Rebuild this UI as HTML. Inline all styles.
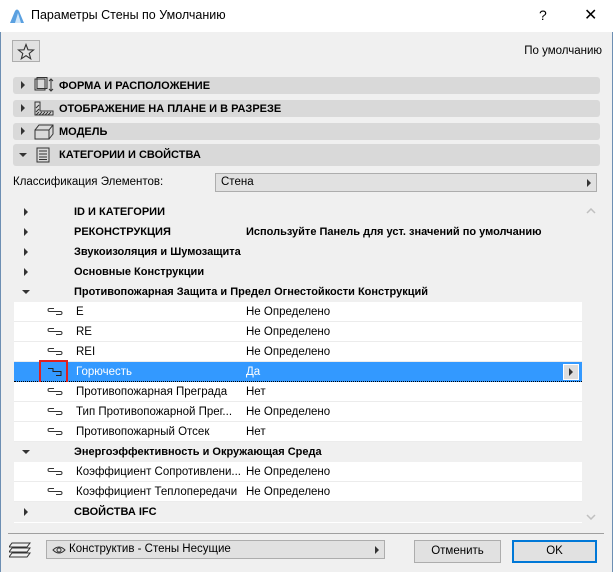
<!DOCTYPE html><html><head><meta charset="utf-8"><style>
*{margin:0;padding:0;box-sizing:border-box}
body{width:613px;height:572px;background:#f0f0f0;font-family:"Liberation Sans",sans-serif;font-size:11.5px;color:#000;position:relative;overflow:hidden}
.a{position:absolute}
.tb{left:0;top:0;width:613px;height:32px;background:#fff}
.sec{left:13px;width:587px;background:#d9d9d9;border-radius:3px;font-weight:bold;font-size:11px}
.sec .t{position:absolute;left:46px;top:50%;transform:translateY(-50%)}
.tri{position:absolute;width:0;height:0;border-top:4px solid transparent;border-bottom:4px solid transparent;border-left:4px solid #333}
.trd{position:absolute;width:0;height:0;border-left:4px solid transparent;border-right:4px solid transparent;border-top:4px solid #333}
.row{position:absolute;left:14px;width:568px;height:20px;line-height:20px;white-space:nowrap}
.cat{background:#f0f0f0;font-weight:bold;font-size:11px}
.ch{background:#fff;border-bottom:1px solid #ececec}
.row .n{position:absolute;left:60px}
.row .v{position:absolute;left:232px}
.lk{position:absolute;left:33px;top:5px}
</style></head><body>
<div class="a" style="left:0;top:0;width:1px;height:572px;background:#6d8fb3"></div>
<div class="a" style="right:0;top:0;width:1px;height:572px;background:#6d8fb3"></div>
<div class="a tb"></div>
<svg class="a" style="left:9px;top:8px" width="16" height="16"><path d="M1 15 L6 3 Q8 0 10 3 L15 15 Z" fill="#5aa0e0"/><path d="M6 15 L9 5 L12 15Z" fill="#cfe6fa"/></svg>
<div class="a" style="left:31px;top:8px;font-size:12.5px">Параметры Стены по Умолчанию</div>
<div class="a" style="left:539px;top:7px;font-size:14px">?</div>
<div class="a" style="left:584px;top:5px;font-size:16px">✕</div>
<div class="a" style="left:12px;top:40px;width:28px;height:22px;border:1px solid #adadad;background:#e1e1e1"></div>
<svg class="a" style="left:17px;top:43px" width="18" height="17"><path d="M9 1.5 L11 6.8 L16.5 7 L12.2 10.4 L13.7 15.8 L9 12.7 L4.3 15.8 L5.8 10.4 L1.5 7 L7 6.8Z" fill="none" stroke="#333" stroke-width="1.1"/></svg>
<div class="a" style="right:11px;top:45px">По умолчанию</div>

<div class="a sec" style="top:77px;height:17px"><div class="tri" style="left:8px;top:4px"></div><svg class="a" style="left:20px;top:0" width="22" height="17"><rect x="2" y="2" width="10" height="11" fill="none" stroke="#333"/><rect x="4" y="0.5" width="10" height="11" fill="none" stroke="#333"/><path d="M18 2v12M16 4l2-2 2 2M16 12l2 2 2-2" stroke="#333" fill="none"/></svg><span class="t">ФОРМА И РАСПОЛОЖЕНИЕ</span></div>
<div class="a sec" style="top:100px;height:17px"><div class="tri" style="left:8px;top:4px"></div><svg class="a" style="left:20px;top:0" width="22" height="17"><path d="M2 2v13h18v-4H7V2Z" fill="none" stroke="#333"/><path d="M3 15l3-3M6 15l3-3M9 15l3-3M12 15l3-3M15 15l3-3M3 12l3-3M3 8l3-3" stroke="#333"/></svg><span class="t">ОТОБРАЖЕНИЕ НА ПЛАНЕ И В РАЗРЕЗЕ</span></div>
<div class="a sec" style="top:123px;height:17px"><div class="tri" style="left:8px;top:4px"></div><svg class="a" style="left:20px;top:0" width="22" height="17"><path d="M2 7h14v9H2ZM2 7l4-5h14v9l-4 5M16 7l4-5" fill="none" stroke="#333"/></svg><span class="t">МОДЕЛЬ</span></div>
<div class="a sec" style="top:144px;height:22px"><div class="trd" style="left:6px;top:9px"></div><svg class="a" style="left:22px;top:3px" width="16" height="16"><path d="M2 1h12v14H2Z" fill="none" stroke="#333"/><path d="M4 4h8M4 7h8M4 10h8M4 12.5h8" stroke="#333"/></svg><span class="t">КАТЕГОРИИ И СВОЙСТВА</span></div>

<div class="a" style="left:13px;top:176px">Классификация Элементов:</div>
<div class="a" style="left:215px;top:173px;width:382px;height:19px;border:1px solid #adadad;background:#e1e1e1"><span style="position:absolute;left:5px;top:2px">Стена</span><div class="tri" style="right:5px;top:5px"></div></div>

<div class="a" style="left:14px;top:202px;width:568px;height:321px;background:#fff"></div>
<div class="row cat" style="top:202px"><div class="tri" style="left:10px;top:6px"></div><span class="n">ID И КАТЕГОРИИ</span></div>
<div class="row cat" style="top:222px"><div class="tri" style="left:10px;top:6px"></div><span class="n">РЕКОНСТРУКЦИЯ</span><span class="v">Используйте Панель для уст. значений по умолчанию</span></div>
<div class="row cat" style="top:242px"><div class="tri" style="left:10px;top:6px"></div><span class="n">Звукоизоляция и Шумозащита</span></div>
<div class="row cat" style="top:262px"><div class="tri" style="left:10px;top:6px"></div><span class="n">Основные Конструкции</span></div>
<div class="row cat" style="top:282px"><div class="trd" style="left:8px;top:8px"></div><span class="n">Противопожарная Защита и Предел Огнестойкости Конструкций</span></div>
<div class="row ch" style="top:302px"><svg class="lk" width="16" height="10"><path d="M7 1.5H2.5Q1 1.5 1 3Q1 4.5 2.5 4.5H11" fill="none" stroke="#333"/><path d="M5 4.5h8.5Q15 4.5 15 6Q15 7.5 13.5 7.5H9" fill="none" stroke="#333"/></svg><span class="n" style="left:62px">E</span><span class="v">Не Определено</span></div>
<div class="row ch" style="top:322px"><svg class="lk" width="16" height="10"><path d="M7 1.5H2.5Q1 1.5 1 3Q1 4.5 2.5 4.5H11" fill="none" stroke="#333"/><path d="M5 4.5h8.5Q15 4.5 15 6Q15 7.5 13.5 7.5H9" fill="none" stroke="#333"/></svg><span class="n" style="left:62px">RE</span><span class="v">Не Определено</span></div>
<div class="row ch" style="top:342px"><svg class="lk" width="16" height="10"><path d="M7 1.5H2.5Q1 1.5 1 3Q1 4.5 2.5 4.5H11" fill="none" stroke="#333"/><path d="M5 4.5h8.5Q15 4.5 15 6Q15 7.5 13.5 7.5H9" fill="none" stroke="#333"/></svg><span class="n" style="left:62px">REI</span><span class="v">Не Определено</span></div>
<div class="row" style="top:362px;background:#3399ff;color:#fff;border-bottom:1px dotted #000"><svg class="lk" width="16" height="10"><path d="M1 1.5H6V4.5H14V8.5H9" fill="none" stroke="#222"/></svg><span class="n" style="left:62px">Горючесть</span><span class="v">Да</span><div style="position:absolute;right:3px;top:2px;width:16px;height:16px;border:1px solid #fff;background:#ddd"><div class="tri" style="left:5px;top:3px"></div></div></div>
<div class="a" style="left:39px;top:360px;width:29px;height:24px;border:2px solid #e02020"></div>
<div class="row ch" style="top:382px"><svg class="lk" width="16" height="10"><path d="M7 1.5H2.5Q1 1.5 1 3Q1 4.5 2.5 4.5H11" fill="none" stroke="#333"/><path d="M5 4.5h8.5Q15 4.5 15 6Q15 7.5 13.5 7.5H9" fill="none" stroke="#333"/></svg><span class="n" style="left:62px">Противопожарная Преграда</span><span class="v">Нет</span></div>
<div class="row ch" style="top:402px"><svg class="lk" width="16" height="10"><path d="M7 1.5H2.5Q1 1.5 1 3Q1 4.5 2.5 4.5H11" fill="none" stroke="#333"/><path d="M5 4.5h8.5Q15 4.5 15 6Q15 7.5 13.5 7.5H9" fill="none" stroke="#333"/></svg><span class="n" style="left:62px">Тип Противопожарной Прег...</span><span class="v">Не Определено</span></div>
<div class="row ch" style="top:422px"><svg class="lk" width="16" height="10"><path d="M7 1.5H2.5Q1 1.5 1 3Q1 4.5 2.5 4.5H11" fill="none" stroke="#333"/><path d="M5 4.5h8.5Q15 4.5 15 6Q15 7.5 13.5 7.5H9" fill="none" stroke="#333"/></svg><span class="n" style="left:62px">Противопожарный Отсек</span><span class="v">Нет</span></div>
<div class="row cat" style="top:442px"><div class="trd" style="left:8px;top:8px"></div><span class="n">Энергоэффективность и Окружающая Среда</span></div>
<div class="row ch" style="top:462px"><svg class="lk" width="16" height="10"><path d="M7 1.5H2.5Q1 1.5 1 3Q1 4.5 2.5 4.5H11" fill="none" stroke="#333"/><path d="M5 4.5h8.5Q15 4.5 15 6Q15 7.5 13.5 7.5H9" fill="none" stroke="#333"/></svg><span class="n" style="left:62px">Коэффициент Сопротивлени...</span><span class="v">Не Определено</span></div>
<div class="row ch" style="top:482px"><svg class="lk" width="16" height="10"><path d="M7 1.5H2.5Q1 1.5 1 3Q1 4.5 2.5 4.5H11" fill="none" stroke="#333"/><path d="M5 4.5h8.5Q15 4.5 15 6Q15 7.5 13.5 7.5H9" fill="none" stroke="#333"/></svg><span class="n" style="left:62px">Коэффициент Теплопередачи</span><span class="v">Не Определено</span></div>
<div class="row cat" style="top:502px"><div class="tri" style="left:10px;top:6px"></div><span class="n">СВОЙСТВА IFC</span></div>
<svg class="a" style="left:586px;top:208px" width="10" height="6"><path d="M1 5l4-4 4 4" fill="none" stroke="#c0c0c0" stroke-width="1.5"/></svg>
<svg class="a" style="left:586px;top:514px" width="10" height="6"><path d="M1 1l4 4 4-4" fill="none" stroke="#c0c0c0" stroke-width="1.5"/></svg>

<div class="a" style="left:8px;top:533px;width:596px;height:1px;background:#a0a0a0"></div>
<svg class="a" style="left:9px;top:541px" width="24" height="18"><path d="M3 2h18l-3 4H0ZM3 7h18l-3 4H0ZM3 12h18l-3 4H0Z" fill="#f0f0f0" stroke="#333"/></svg>
<div class="a" style="left:46px;top:540px;width:339px;height:19px;border:1px solid #adadad;background:#e1e1e1"><svg style="position:absolute;left:5px;top:4px" width="14" height="10"><path d="M1 5Q7 -1 13 5Q7 11 1 5Z" fill="none" stroke="#333"/><circle cx="7" cy="5" r="2" fill="none" stroke="#333"/></svg><span style="position:absolute;left:22px;top:2px">Конструктив - Стены Несущие</span><div class="tri" style="right:5px;top:5px"></div></div>
<div class="a" style="left:414px;top:540px;width:87px;height:23px;border:1px solid #adadad;background:#e1e1e1;text-align:center;line-height:21px">Отменить</div>
<div class="a" style="left:512px;top:540px;width:85px;height:23px;border:2px solid #0078d7;background:#e1e1e1;text-align:center;line-height:19px">OK</div>
</body></html>
